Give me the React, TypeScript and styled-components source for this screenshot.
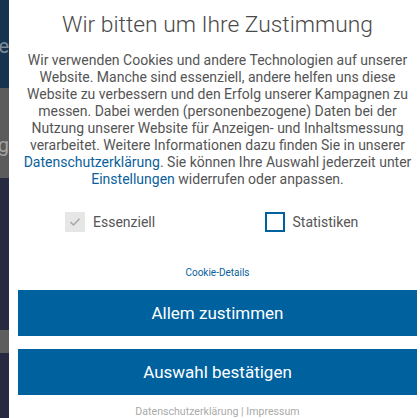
import styled, { createGlobalStyle } from "styled-components";

const GlobalStyle = createGlobalStyle`
  html, body {
    margin: 0;
    padding: 0;
    background: #ffffff;
  }
  body {
    font-family: Roboto, "Liberation Sans", Arial, sans-serif;
    overflow: hidden;
  }
`;

const Page = styled.div`
  display: flex;
  width: 420px;
  height: 418px;
  overflow: hidden;
`;

const Backdrop = styled.div`
  width: 9px;
  flex-shrink: 0;
  display: flex;
  flex-direction: column;
  overflow: hidden;
`;

const Stripe = styled.div<{ $h: number; $bg: string; $pad: number }>`
  height: ${(props) => props.$h}px;
  flex-shrink: 0;
  box-sizing: border-box;
  padding-top: ${(props) => props.$pad}px;
  background: ${(props) => props.$bg};
  display: flex;
  justify-content: flex-end;
  align-items: flex-start;
  color: rgba(255, 255, 255, 0.45);
  font-size: 20px;
  line-height: 1;
  white-space: nowrap;
  overflow: hidden;
`;

const Modal = styled.div`
  width: 417px;
  flex-shrink: 0;
  background: #ffffff;
  padding: 0 9px;
  box-sizing: border-box;
  display: flex;
  flex-direction: column;
`;

const Title = styled.h1`
  margin: 10px 0 0;
  font-size: 22.8px;
  font-weight: 300;
  line-height: 30px;
  color: #4a4a4a;
  text-align: center;
`;

const Text = styled.p`
  margin: 12px 0 0;
  padding: 0;
  font-size: 14px;
  line-height: 17px;
  color: #555555;
  text-align: center;
`;

const Link = styled.a`
  color: #0a5f9c;
  text-decoration: none;
`;

const Options = styled.div`
  display: grid;
  grid-template-columns: 1fr 1fr;
  margin-top: 24px;
`;

const Option = styled.label`
  display: flex;
  align-items: center;
  gap: 8px;
  padding-left: 47px;
  font-size: 14px;
  line-height: 20px;
  color: #555555;
`;

const Box = styled.span<{ $disabled?: boolean }>`
  width: 20px;
  height: 20px;
  box-sizing: border-box;
  display: flex;
  align-items: center;
  justify-content: center;
  background: ${(props) => (props.$disabled ? "#e6e6e6" : "#ffffff")};
  border: ${(props) => (props.$disabled ? "none" : "2px solid #00619f")};
`;

const Details = styled.a`
  margin-top: 35px;
  align-self: center;
  font-size: 10px;
  line-height: 12px;
  color: #0a5f9c;
  text-decoration: none;
`;

const Button = styled.button`
  margin-top: 13px;
  height: 46px;
  border: none;
  background: #00619f;
  color: #ffffff;
  font-family: inherit;
  font-size: 17px;
  font-weight: 400;
  cursor: pointer;
  &:first-of-type {
    margin-top: 11px;
  }
`;

const Footer = styled.div`
  margin-top: 10px;
  text-align: center;
  font-size: 10.6px;
  line-height: 13px;
  color: #aaaaaa;
`;

const stripes = [
  { h: 88, bg: "#16344f", glyph: "e", pad: 36 },
  { h: 90, bg: "#5b5b5b", glyph: "g", pad: 47 },
  { h: 152, bg: "#262940", glyph: "", pad: 0 },
  { h: 23, bg: "#5e5e5e", glyph: "", pad: 0 },
  { h: 65, bg: "#262940", glyph: "", pad: 0 },
];

function App() {
  return (
    <>
      <GlobalStyle />
      <Page>
        <Backdrop>
          {stripes.map((s, i) => (
            <Stripe key={i} $h={s.h} $bg={s.bg} $pad={s.pad}>
              {s.glyph}
            </Stripe>
          ))}
        </Backdrop>
        <Modal>
          <Title>Wir bitten um Ihre Zustimmung</Title>
          <Text>
            Wir verwenden Cookies und andere Technologien auf unserer Website.
            Manche sind essenziell, andere helfen uns diese Website zu
            verbessern und den Erfolg unserer Kampagnen zu messen. Dabei werden
            (personenbezogene) Daten bei der Nutzung unserer Website für
            Anzeigen- und Inhaltsmessung verarbeitet. Weitere Informationen dazu
            finden Sie in unserer <Link href="#">Datenschutzerklärung</Link>.
            Sie können Ihre Auswahl jederzeit unter{" "}
            <Link href="#">Einstellungen</Link> widerrufen oder anpassen.
          </Text>
          <Options>
            <Option>
              <Box $disabled>
                <svg width="12" height="10" viewBox="0 0 12 10">
                  <path
                    d="M1.5 5.2 L4.5 8 L10.5 1.8"
                    fill="none"
                    stroke="#a8a8a8"
                    strokeWidth="1.6"
                  />
                </svg>
              </Box>
              Essenziell
            </Option>
            <Option>
              <Box />
              Statistiken
            </Option>
          </Options>
          <Details href="#">Cookie-Details</Details>
          <Button>Allem zustimmen</Button>
          <Button>Auswahl bestätigen</Button>
          <Footer>Datenschutzerklärung | Impressum</Footer>
        </Modal>
      </Page>
    </>
  );
}

export default App;
